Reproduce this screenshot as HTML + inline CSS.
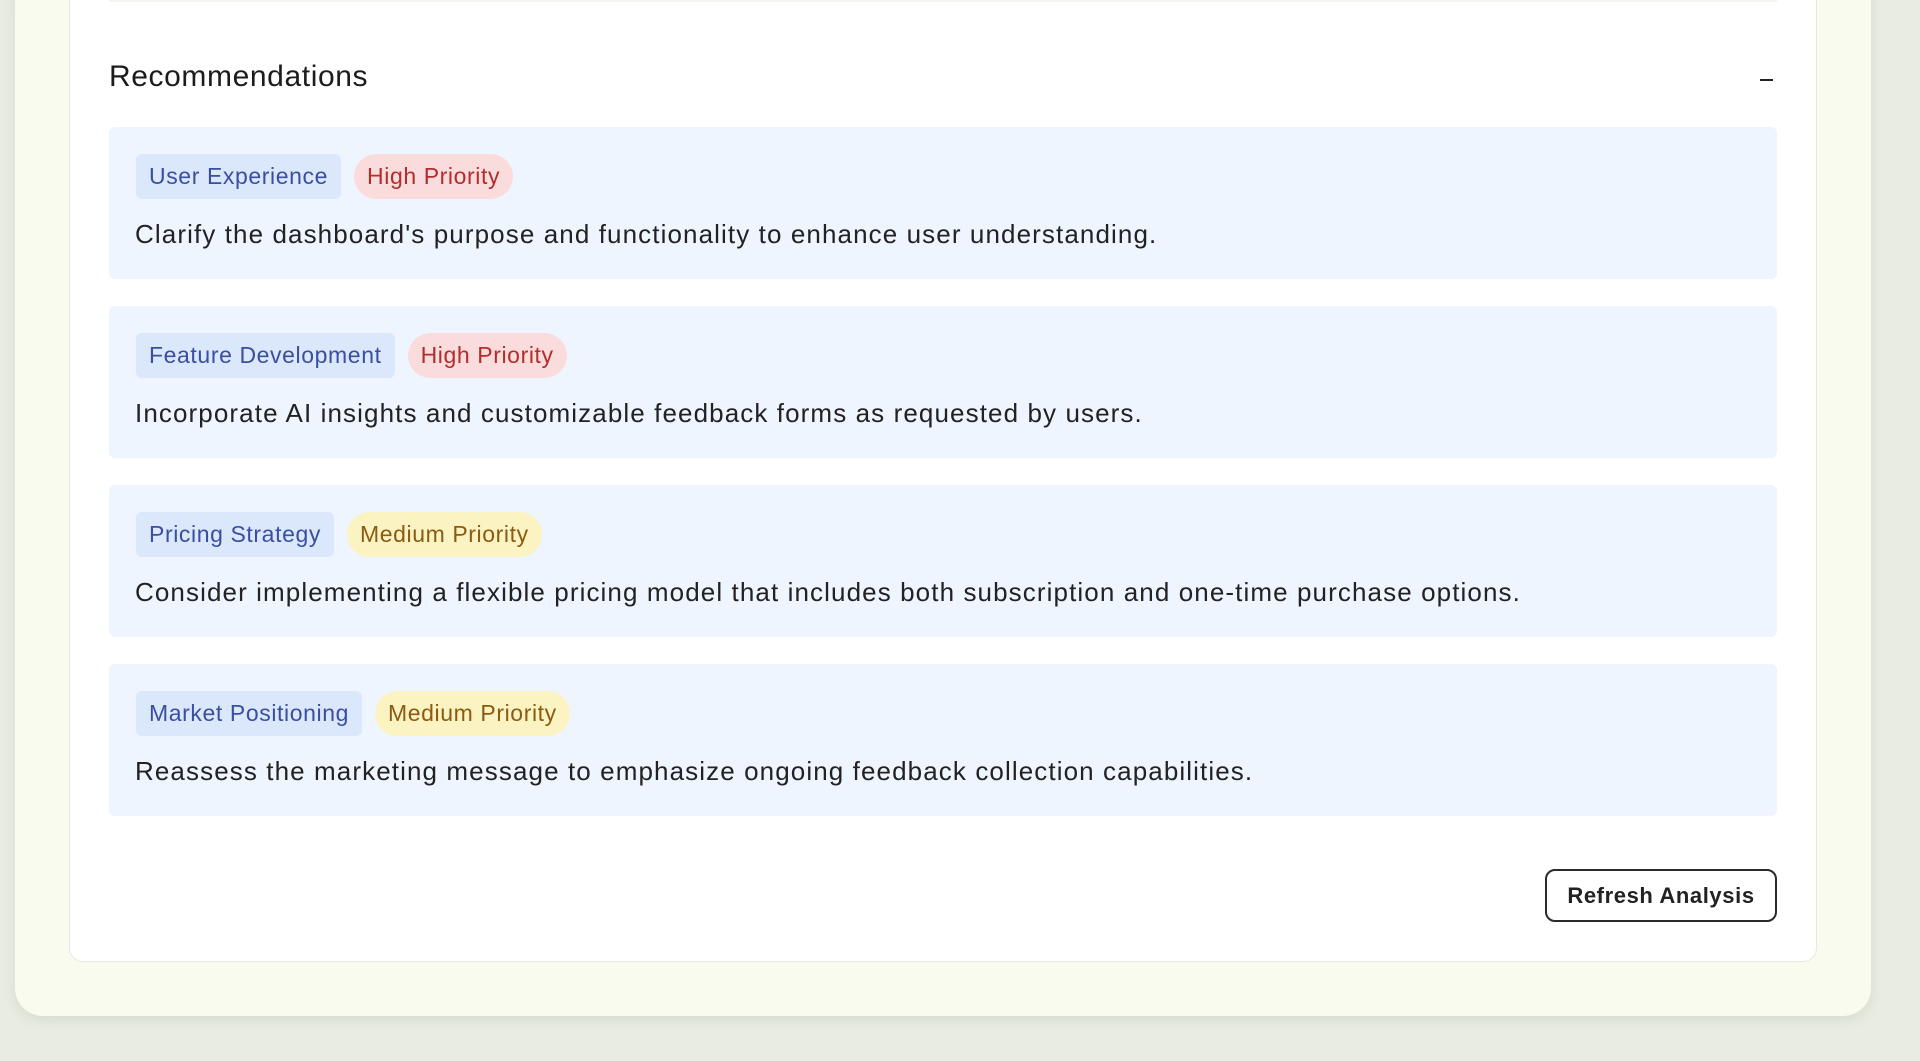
<!DOCTYPE html>
<html><head><meta charset="utf-8"><style>
*{box-sizing:border-box;margin:0;padding:0}
body{width:1920px;height:1061px;background:#e9ede1;font-family:"Liberation Sans",sans-serif;position:relative;overflow:hidden}
.outer{position:absolute;left:15px;top:-30px;width:1856px;height:1046px;background:#f8fbee;border-radius:28px;box-shadow:0 4px 14px rgba(0,0,0,0.08)}
.inner{position:absolute;left:69px;top:-20px;width:1748px;height:982px;background:#fff;border:1px solid #e6e9e0;border-radius:14px}
.topline{position:absolute;left:109px;top:0;width:1668px;height:2px;background:#f2f4f0}
h2{position:absolute;left:109px;top:60px;font-size:30px;font-weight:500;color:#1c1c1c;letter-spacing:0.6px}
.minus{position:absolute;left:1760px;top:79px;width:13px;height:2px;background:#222}
.card{position:absolute;left:109px;width:1668px;height:152px;background:#eef5ff;border-radius:6px}
.tags{position:absolute;left:27px;top:27px;display:flex;gap:13px}
.tag{height:45px;line-height:45px;padding:0 13px;font-size:23px;border-radius:6px;letter-spacing:0.6px}
.cat{background:#dbe7fb;color:#3a4f9f}
.high{background:#fbdcdc;color:#b22d2d;border-radius:23px}
.med{background:#fcf3c3;color:#8a5b10;border-radius:23px}
.desc{position:absolute;left:26px;top:92px;font-size:26px;color:#222;letter-spacing:1.1px}
.btn{position:absolute;left:1545px;top:869px;width:232px;height:53px;border:2px solid #2a2a2a;border-radius:10px;font-size:22px;font-weight:bold;color:#222;text-align:center;line-height:49px;background:#fff;letter-spacing:0.6px}
</style></head><body>
<div class="outer"></div>
<div class="inner"></div>
<div class="topline"></div>
<h2>Recommendations</h2>
<div class="minus"></div>
<div class="card" style="top:127px"><div class="tags"><span class="tag cat">User Experience</span><span class="tag high">High Priority</span></div><div class="desc">Clarify the dashboard's purpose and functionality to enhance user understanding.</div></div>
<div class="card" style="top:306px"><div class="tags"><span class="tag cat">Feature Development</span><span class="tag high">High Priority</span></div><div class="desc">Incorporate AI insights and customizable feedback forms as requested by users.</div></div>
<div class="card" style="top:485px"><div class="tags"><span class="tag cat">Pricing Strategy</span><span class="tag med">Medium Priority</span></div><div class="desc">Consider implementing a flexible pricing model that includes both subscription and one-time purchase options.</div></div>
<div class="card" style="top:664px"><div class="tags"><span class="tag cat">Market Positioning</span><span class="tag med">Medium Priority</span></div><div class="desc">Reassess the marketing message to emphasize ongoing feedback collection capabilities.</div></div>
<div class="btn">Refresh Analysis</div>
</body></html>
